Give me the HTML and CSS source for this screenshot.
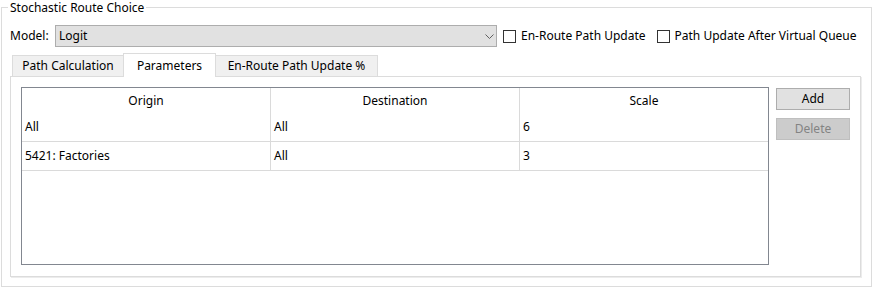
FILE: index.html
```html
<!DOCTYPE html>
<html>
<head>
<meta charset="utf-8">
<link rel="stylesheet" href="styles.css">
</head>
<body>
<div class="group">
  <div class="title">Stochastic Route Choice</div>
  <div class="model-row">
    <span class="lbl">Model:</span>
    <div class="combo">
      <span>Logit</span>
      <svg class="chev" width="9" height="5" viewBox="0 0 9 5"><polyline points="0.5,0.5 4.5,4.5 8.5,0.5" fill="none" stroke="#606060" stroke-width="1"/></svg>
    </div>
    <label class="chk chk1"><span class="box"></span><span class="chk-text">En-Route Path Update</span></label>
    <label class="chk chk2"><span class="box"></span><span class="chk-text">Path Update After Virtual Queue</span></label>
  </div>
  <div class="tabs">
    <div class="tab tab1">Path Calculation</div>
    <div class="tab tab-active">Parameters</div>
    <div class="tab tab3">En-Route Path Update %</div>
  </div>
  <div class="pane">
    <div class="table">
      <div class="cell head">Origin</div>
      <div class="cell head">Destination</div>
      <div class="cell head last">Scale</div>
      <div class="cell row">All</div>
      <div class="cell row">All</div>
      <div class="cell row last">6</div>
      <div class="cell row">5421: Factories</div>
      <div class="cell row">All</div>
      <div class="cell row last">3</div>
    </div>
    <div class="btns">
      <button class="btn">Add</button>
      <button class="btn btn-disabled" disabled>Delete</button>
    </div>
  </div>
</div>
</body>
</html>
```
FILE: styles.css
```css
* { box-sizing: border-box; }
html, body { margin: 0; padding: 0; background: #fff; }
body {
  font-family: "Segoe UI", "Noto Sans", sans-serif;
  font-size: 12px;
  line-height: 16px;
  color: #000;
  width: 873px;
  height: 287px;
  overflow: hidden;
}
.group {
  margin: 7px 1px 0 1px;
  border: 1px solid #dcdcdc;
  padding: 0 10px 9px 8px;
}
.title {
  display: block;
  width: max-content;
  margin: -8px 0 0 -2px;
  padding: 0 2px;
  background: #fff;
  line-height: 16px;
  height: 16px;
}
.model-row {
  display: flex;
  align-items: center;
  margin-top: 9px;
  height: 22px;
}
.lbl { width: 45px; flex: none; }
.combo {
  width: 442px;
  height: 22px;
  flex: none;
  background: #e1e1e1;
  border: 1px solid #adadad;
  display: flex;
  align-items: center;
  justify-content: space-between;
  padding: 0 2px 0 3px;
}
.chev { display: block; margin-top: 1px; }
.chk {
  display: flex;
  align-items: center;
  flex: none;
}
.chk1 { margin-left: 6px; }
.chk2 { margin-left: 11px; }
.box {
  width: 13px;
  height: 13px;
  border: 1px solid #333;
  background: #fff;
  margin-right: 5px;
  flex: none;
}
.tabs {
  display: flex;
  align-items: flex-end;
  margin-top: 6px;
  margin-left: 2px;
  height: 23px;
}
.tab {
  height: 21px;
  background: #f0f0f0;
  border: 1px solid #dcdcdc;
  border-bottom: none;
  text-align: center;
  line-height: 20px;
  flex: none;
}
.tab1 { width: 111px; border-right: none; }
.tab-active {
  width: 93px;
  height: 24px;
  background: #fff;
  margin-bottom: -1px;
  position: relative;
  z-index: 1;
  line-height: 23px;
  padding-bottom: 1px;
}
.tab3 { width: 162px; border-left: none; }
.pane {
  border: 1px solid #dcdcdc;
  box-shadow: 1px 1px 0 #ececec;
  padding: 10px 10px 11px 10px;
  display: flex;
  align-items: flex-start;
  height: 201px;
}
.table {
  width: 748px;
  height: 178px;
  border: 1px solid #828790;
  display: grid;
  grid-template-columns: 249px 249px 248px;
  grid-template-rows: 25px 29px 29px;
  align-content: start;
  flex: none;
}
.cell {
  border-right: 1px solid #dadada;
  padding-left: 3px;
  white-space: nowrap;
}
.cell.last { border-right: none; }
.head {
  text-align: center;
  line-height: 25px;
  padding-left: 0;
}
.row {
  border-bottom: 1px solid #dadada;
  line-height: 27px;
}
.btns {
  margin-left: 7px;
  margin-top: 1px;
  display: flex;
  flex-direction: column;
  gap: 8px;
}
.btn {
  width: 74px;
  height: 22px;
  background: #e1e1e1;
  border: 1px solid #adadad;
  font-family: inherit;
  font-size: 12px;
  color: #000;
  padding: 0;
  margin: 0;
  line-height: 20px;
}
.btn-disabled {
  background: #cccccc;
  border-color: #bfbfbf;
  color: #838383;
}
```
